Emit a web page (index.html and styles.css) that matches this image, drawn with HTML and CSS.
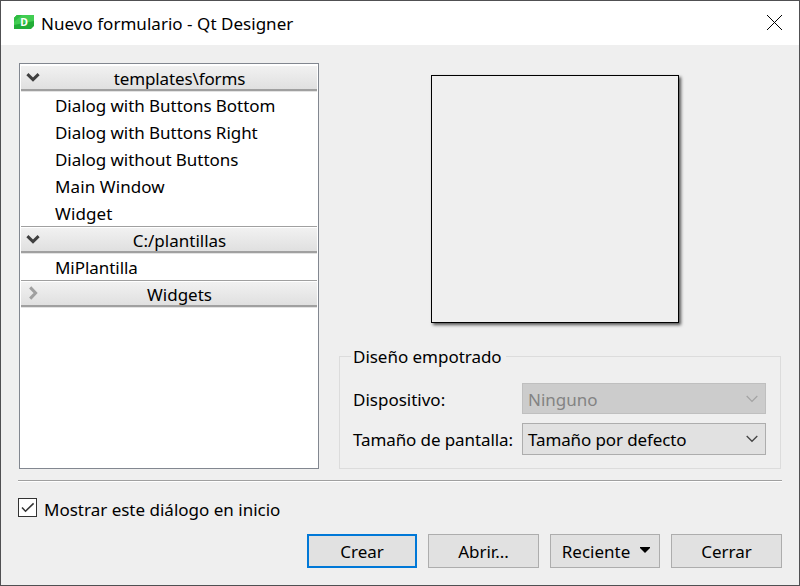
FILE: index.html
```html
<!DOCTYPE html>
<html lang="es">
<head>
<meta charset="utf-8">
<title>Nuevo formulario - Qt Designer</title>
<link rel="stylesheet" href="styles.css">
</head>
<body>
<div class="window">
  <header class="titlebar">
    <svg class="logo" width="20" height="14" viewBox="0 0 20 14">
      <path d="M3 0H20V11L17 14H0V3Z" fill="#22ad38"/>
      <path d="M3 0H20V6L0 10V3Z" fill="#41cd52"/>
      <path d="M0 3L3 0L8 0L0 7Z" fill="#2fbc43"/>
      <text x="10" y="11" text-anchor="middle" class="logo-letter">D</text>
    </svg>
    <span class="title">Nuevo formulario - Qt Designer</span>
    <svg class="close" width="17" height="17" viewBox="0 0 17 17"><path d="M1 1L16 16M16 1L1 16" stroke="#000" stroke-width="1" fill="none"/></svg>
  </header>
  <main class="content">
    <div class="columns">
      <div class="tree">
        <div class="group first"><svg class="chevron" width="16" height="16" viewBox="0 0 16 16"><path d="M2.4 5.2L8 10.6L13.6 5.2" stroke="#404040" stroke-width="3" fill="none"/></svg><span class="tight">templates\forms</span></div>
        <div class="item">Dialog with Buttons Bottom</div>
        <div class="item">Dialog with Buttons Right</div>
        <div class="item">Dialog without Buttons</div>
        <div class="item wide">Main Window</div>
        <div class="item wide">Widget</div>
        <div class="group"><svg class="chevron" width="16" height="16" viewBox="0 0 16 16"><path d="M2.4 5.2L8 10.6L13.6 5.2" stroke="#404040" stroke-width="3" fill="none"/></svg><span>C:/plantillas</span></div>
        <div class="item">MiPlantilla</div>
        <div class="group"><svg class="chevron" width="16" height="16" viewBox="0 0 16 16"><path d="M5.2 2.4L10.6 8L5.2 13.6" stroke="#a0a0a0" stroke-width="3" fill="none"/></svg><span>Widgets</span></div>
      </div>
      <div class="side">
        <div class="preview"></div>
        <fieldset class="embedded">
          <legend>Diseño empotrado</legend>
          <div class="form">
            <span>Dispositivo:</span>
            <div class="combo disabled"><span>Ninguno</span><svg width="12" height="8" viewBox="0 0 12 8"><path d="M.7 1L6 6.3L11.3 1" stroke="#a3a3a3" stroke-width="1.2" fill="none"/></svg></div>
            <span class="screen-label">Tamaño de pantalla:</span>
            <div class="combo"><span class="tight">Tamaño por defecto</span><svg width="12" height="8" viewBox="0 0 12 8"><path d="M.7 1L6 6.3L11.3 1" stroke="#444" stroke-width="1.3" fill="none"/></svg></div>
          </div>
        </fieldset>
      </div>
    </div>
    <div class="separator"></div>
    <div class="option">
      <span class="checkbox"><svg width="17" height="17" viewBox="0 0 17 17"><path d="M3 8.6L6.5 12.2L14.6 4.4" stroke="#333" stroke-width="1.5" fill="none"/></svg></span>
      <span>Mostrar este diálogo en inicio</span>
    </div>
    <div class="buttons">
      <div class="button default">Crear</div>
      <div class="button">Abrir...</div>
      <div class="button menu">Reciente<svg width="10" height="6" viewBox="0 0 10 6"><path d="M0 0H10V1L5 6L0 1Z"/></svg></div>
      <div class="button">Cerrar</div>
    </div>
  </main>
</div>
</body>
</html>
```
FILE: styles.css
```css
* { box-sizing: border-box; }
body {
  margin: 0;
  font: 17px/24px "Noto Sans", "Open Sans", sans-serif;
  color: #000;
}
.window {
  width: 800px;
  height: 586px;
  border: 1px solid #505052;
  background: #efefef;
}
.titlebar {
  height: 44px;
  padding: 0 16px 0 13px;
  background: #fff;
  display: flex;
  align-items: center;
}
.logo { margin-top: -2px; }
.logo-letter { font: bold 10.5px "Noto Sans", sans-serif; fill: #fff; }
.title { margin-left: 7px; letter-spacing: .03px; padding-top: 1px; }
.close { margin: -2px 0 0 auto; }
.content { padding: 18px 17px 0 17px; }
.columns { display: flex; height: 406px; padding-left: 1px; }
.tree {
  width: 300px;
  height: 406px;
  padding: 0 1px;
  border: 1px solid #828790;
  background: #fff;
}
.item { height: 27px; padding: 3px 0 0 34px; line-height: 24px; letter-spacing: -.05px; }
.item.wide { letter-spacing: .1px; }
.group {
  position: relative;
  height: 27px;
  padding: 2px 0 0 21px;
  text-align: center;
  line-height: 24px;
  background: linear-gradient(#f2f2f2, #e0e0e0);
  border-top: 1px solid #a0a0a0;
  border-bottom: 2px solid #a0a0a0;
  box-shadow: 0 1px #e3e3e3, inset 0 1px #fff;
}
.group.first { border-top-color: #fff; }
.chevron { position: absolute; left: 4px; top: 4px; }
.tight { letter-spacing: -.12px; }
.side { width: 442px; margin-left: 20px; padding-top: 12px; }
.preview {
  width: 248px;
  height: 248px;
  margin-left: 92px;
  border: 1px solid #000;
  box-shadow: 2px 2px 3px rgba(0, 0, 0, .65);
}
.embedded {
  height: 124px;
  margin: 22px 0 0;
  padding: 0 14px;
  border: 1px solid #dcdcdc;
}
legend { margin-left: -3px; padding: 0 4px 0 2px; line-height: 23px; letter-spacing: -.03px; }
.form {
  display: grid;
  grid-template-columns: 168px 244px;
  grid-template-rows: 31px 32px;
  row-gap: 9px;
  padding-top: 15px;
  align-items: center;
}
.form > span { padding-top: 3px; margin-left: -1px; }
.form > .screen-label { padding-top: 1px; letter-spacing: -.1px; }
.combo {
  height: 100%;
  padding: 2px 7px 0 5px;
  display: flex;
  align-items: center;
  justify-content: space-between;
  border: 1px solid #adadad;
  background: #e1e1e1;
}
.combo svg { margin-top: -2px; }
.combo.disabled { background: #ccc; border-color: #bfbfbf; color: #838383; }
.separator { height: 2px; margin-top: 11px; background: #a0a0a0; border-bottom: 1px solid #fff; }
.option { display: flex; align-items: center; height: 19px; margin-top: 16px; }
.option > span:last-child { margin-left: 7px; padding-top: 4px; }
.checkbox { width: 19px; height: 19px; border: 1px solid #333; background: #fff; }
.checkbox svg { display: block; }
.buttons { display: grid; grid-template-columns: 110px 111px 110px 111px; column-gap: 11px; justify-content: end; margin-top: 17px; }
.button {
  height: 34px;
  padding-top: 2px;
  display: flex;
  align-items: center;
  justify-content: center;
  border: 1px solid #adadad;
  background: #e1e1e1;
}
.button.default { border: 2px solid #0078d7; }
.button.menu { padding-left: 2px; }
.button.menu svg { margin: -4px 0 0 10px; }
```
